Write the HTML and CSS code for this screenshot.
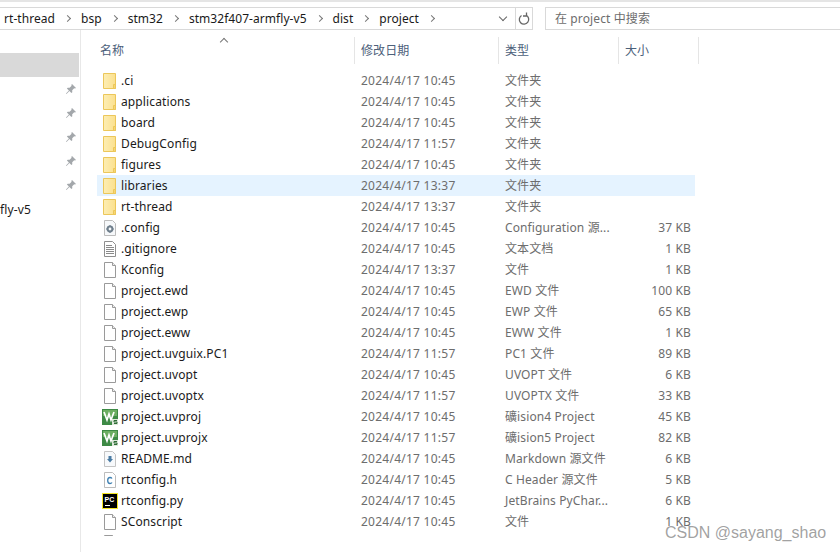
FILE: index.html

```html
<!DOCTYPE html>
<html lang="zh-CN">
<head>
  <meta charset="UTF-8">
  <title>project</title>
  <link rel="stylesheet" href="styles.css">
</head>
<body>

  <svg class="defs" width="0" height="0">
    <defs>
      <linearGradient id="folder-fill" x1="0" y1="0" x2="1" y2="0">
        <stop offset="0" stop-color="#fdeeb4"/>
        <stop offset="1" stop-color="#fbe08e"/>
      </linearGradient>
    </defs>
    <symbol id="folder" viewBox="0 0 16 16">
      <path d="M1.5 .5h12v15h-12z" fill="url(#folder-fill)" stroke="#ecc75a"/>
      <path d="M11.5 15.500v-4h2v4z" fill="#f8d672" stroke="#ecc75a"/>
    </symbol>
    <symbol id="file" viewBox="0 0 16 16">
      <path d="M2.5 .5h8l3 3v12h-11z" fill="#fff" stroke="#9a9a9a"/>
      <path d="M10.5 .5v3h3" fill="#eee" stroke="#9a9a9a"/>
    </symbol>
    <symbol id="text" viewBox="0 0 16 16">
      <path d="M2.5 .5h8l3 3v12h-11z" fill="#fff" stroke="#8f8f8f"/>
      <path d="M4 4.500h6M4 6.500h8M4 8.500h8M4 10.500h8M4 12.500h8" stroke="#8a8a8a"/>
    </symbol>
    <symbol id="gear" viewBox="0 0 16 16">
      <path d="M2.5 .5h8l3 3v12h-11z" fill="#f6f8fa" stroke="#bcbcbc"/>
      <circle cx="8" cy="9" r="2.4" fill="none" stroke="#6f7f8c" stroke-width="2"/>
      <path d="M8 5v1.500M8 11.500V13M4 9h1.500M10.500 9H12" stroke="#6f7f8c" stroke-width="1.2"/>
    </symbol>
    <symbol id="readme" viewBox="0 0 16 16">
      <path d="M2.500 .5h8l3 3v12h-11z" fill="#f7f9fb" stroke="#c4c4c4"/>
      <path d="M6.500 5h3v3h1.500L8 11.500 5 8h1.500z" fill="#4a7ba3"/>
    </symbol>
    <symbol id="cfile" viewBox="0 0 16 16">
      <path d="M2.500 .5h8l3 3v12h-11z" fill="#fff" stroke="#bcbcbc"/>
      <path d="M10 6.500Q9.300 5.500 8 5.500 5.700 5.500 5.700 8.500T8 11.500Q9.300 11.500 10 10.500" fill="none" stroke="#3c7fb1" stroke-width="1.3"/>
    </symbol>
    <symbol id="keil" viewBox="0 0 16 16">
      <rect width="16" height="16" fill="#3d8a45"/>
      <path d="M1 1h14v6H1z" fill="#6cae62"/>
      <path d="M2 3l3 8 2-6 2 6 3-8" fill="none" stroke="#fff" stroke-width="1.7"/>
      <rect x="10" y="10" width="6" height="6" fill="#dfe8dc"/>
      <path d="M15 11.500h-3v1.500h3v1.500h-3" fill="none" stroke="#2d6b35"/>
    </symbol>
    <symbol id="pycharm" viewBox="0 0 16 16">
      <rect width="16" height="16" fill="#f5e625"/>
      <rect x="1" y="1" width="14" height="14" fill="#000"/>
      <path d="M3 12h5v1H3z" fill="#fff"/>
      <text x="2.500" y="8.500" class="pc-mark">PC</text>
    </symbol>
    <symbol id="pin" viewBox="0 0 12 12">
      <path d="M7 1l4 4-1 .6-.8-.3-2 2 .1 1.900-.9.800-2-2L1.500 11 1 10.500l2.900-2.900-2-2 .8-.9 1.900.1 2-2L6.300 2z" fill="#a3a7ab"/>
    </symbol>
  </svg>

  <div class="window">
    <div class="toolbar">
      <div class="address">
        <div class="crumbs">
          <span>rt-thread</span><i class="sep"></i>
          <span>bsp</span><i class="sep"></i>
          <span>stm32</span><i class="sep"></i>
          <span>stm32f407-armfly-v5</span><i class="sep"></i>
          <span>dist</span><i class="sep"></i>
          <span>project</span><i class="sep"></i>
        </div>
        <i class="chevron"></i>
        <div class="refresh">
          <svg width="12" height="14" viewBox="0 0 12 14"><path d="M3.500 3.500A4.700 4.700 0 1 0 8 3.200M8.500 .5v3.500H5" fill="none" stroke="#666" stroke-width="1.3"/></svg>
        </div>
      </div>
      <div class="search">在 project 中搜索</div>
    </div>

    <div class="main">
      <nav class="sidebar">
        <div class="nav-item selected"></div>
        <div class="nav-item"><svg class="pin"><use href="#pin"/></svg></div>
        <div class="nav-item"><svg class="pin"><use href="#pin"/></svg></div>
        <div class="nav-item"><svg class="pin"><use href="#pin"/></svg></div>
        <div class="nav-item"><svg class="pin"><use href="#pin"/></svg></div>
        <div class="nav-item"><svg class="pin"><use href="#pin"/></svg></div>
        <div class="nav-item nav-label">fly-v5</div>
      </nav>

      <section class="files">
        <div class="sort-arrow"></div>
        <div class="head">
          <div class="col-name">名称</div>
          <div class="col-date">修改日期</div>
          <div class="col-type">类型</div>
          <div class="col-size">大小</div>
        </div>

        <div class="rows">
          <div class="row"><span class="name"><svg class="icon"><use href="#folder"/></svg>.ci</span><span class="date">2024/4/17 10:45</span><span class="type">文件夹</span><span class="size"></span></div>
          <div class="row"><span class="name"><svg class="icon"><use href="#folder"/></svg>applications</span><span class="date">2024/4/17 10:45</span><span class="type">文件夹</span><span class="size"></span></div>
          <div class="row"><span class="name"><svg class="icon"><use href="#folder"/></svg>board</span><span class="date">2024/4/17 10:45</span><span class="type">文件夹</span><span class="size"></span></div>
          <div class="row"><span class="name"><svg class="icon"><use href="#folder"/></svg>DebugConfig</span><span class="date">2024/4/17 11:57</span><span class="type">文件夹</span><span class="size"></span></div>
          <div class="row"><span class="name"><svg class="icon"><use href="#folder"/></svg>figures</span><span class="date">2024/4/17 10:45</span><span class="type">文件夹</span><span class="size"></span></div>
          <div class="row hover"><span class="name"><svg class="icon"><use href="#folder"/></svg>libraries</span><span class="date">2024/4/17 13:37</span><span class="type">文件夹</span><span class="size"></span></div>
          <div class="row"><span class="name"><svg class="icon"><use href="#folder"/></svg>rt-thread</span><span class="date">2024/4/17 13:37</span><span class="type">文件夹</span><span class="size"></span></div>
          <div class="row"><span class="name"><svg class="icon"><use href="#gear"/></svg>.config</span><span class="date">2024/4/17 10:45</span><span class="type">Configuration 源...</span><span class="size">37 KB</span></div>
          <div class="row"><span class="name"><svg class="icon"><use href="#text"/></svg>.gitignore</span><span class="date">2024/4/17 10:45</span><span class="type">文本文档</span><span class="size">1 KB</span></div>
          <div class="row"><span class="name"><svg class="icon"><use href="#file"/></svg>Kconfig</span><span class="date">2024/4/17 13:37</span><span class="type">文件</span><span class="size">1 KB</span></div>
          <div class="row"><span class="name"><svg class="icon"><use href="#file"/></svg>project.ewd</span><span class="date">2024/4/17 10:45</span><span class="type">EWD 文件</span><span class="size">100 KB</span></div>
          <div class="row"><span class="name"><svg class="icon"><use href="#file"/></svg>project.ewp</span><span class="date">2024/4/17 10:45</span><span class="type">EWP 文件</span><span class="size">65 KB</span></div>
          <div class="row"><span class="name"><svg class="icon"><use href="#file"/></svg>project.eww</span><span class="date">2024/4/17 10:45</span><span class="type">EWW 文件</span><span class="size">1 KB</span></div>
          <div class="row"><span class="name"><svg class="icon"><use href="#file"/></svg>project.uvguix.PC1</span><span class="date">2024/4/17 11:57</span><span class="type">PC1 文件</span><span class="size">89 KB</span></div>
          <div class="row"><span class="name"><svg class="icon"><use href="#file"/></svg>project.uvopt</span><span class="date">2024/4/17 10:45</span><span class="type">UVOPT 文件</span><span class="size">6 KB</span></div>
          <div class="row"><span class="name"><svg class="icon"><use href="#file"/></svg>project.uvoptx</span><span class="date">2024/4/17 11:57</span><span class="type">UVOPTX 文件</span><span class="size">33 KB</span></div>
          <div class="row"><span class="name"><svg class="icon"><use href="#keil"/></svg>project.uvproj</span><span class="date">2024/4/17 10:45</span><span class="type">礦ision4 Project</span><span class="size">45 KB</span></div>
          <div class="row"><span class="name"><svg class="icon"><use href="#keil"/></svg>project.uvprojx</span><span class="date">2024/4/17 11:57</span><span class="type">礦ision5 Project</span><span class="size">82 KB</span></div>
          <div class="row"><span class="name"><svg class="icon"><use href="#readme"/></svg>README.md</span><span class="date">2024/4/17 10:45</span><span class="type">Markdown 源文件</span><span class="size">6 KB</span></div>
          <div class="row"><span class="name"><svg class="icon"><use href="#cfile"/></svg>rtconfig.h</span><span class="date">2024/4/17 10:45</span><span class="type">C Header 源文件</span><span class="size">5 KB</span></div>
          <div class="row"><span class="name"><svg class="icon"><use href="#pycharm"/></svg>rtconfig.py</span><span class="date">2024/4/17 10:45</span><span class="type">JetBrains PyChar...</span><span class="size">6 KB</span></div>
          <div class="row"><span class="name"><svg class="icon"><use href="#file"/></svg>SConscript</span><span class="date">2024/4/17 10:45</span><span class="type">文件</span><span class="size">1 KB</span></div>
          <div class="row"><span class="name"><svg class="icon"><use href="#file"/></svg></span></div>
        </div>
      </section>
    </div>
  </div>

  <div class="watermark">CSDN @sayang_shao</div>

</body>
</html>
```

FILE: styles.css

```css
html, body {
  margin: 0;
  height: 100%;
  overflow: hidden;
  background: #fff;
}
body {
  font-family: "Noto Sans", "Noto Sans CJK SC", sans-serif;
  font-size: 12px;
  letter-spacing: .12px;
  color: #1a1a1a;
}
.defs {
  display: block;
  height: 0;
}
.pc-mark {
  font-family: "Liberation Sans", sans-serif;
  font-size: 7px;
  font-weight: bold;
  fill: #fff;
}

.window {
  height: 552px;
  display: flex;
  flex-direction: column;
  border-top: 2px solid #e5e5e5;
  padding-top: 5px;
  box-sizing: border-box;
}

/* address bar + search */
.toolbar {
  display: flex;
  height: 23px;
  gap: 12px;
}
.address {
  width: 533px;
  box-sizing: border-box;
  display: flex;
  align-items: center;
  border: 1px solid #d9d9d9;
  border-left: none;
}
.crumbs {
  flex: 1;
  display: flex;
  align-items: center;
  padding-left: 4px;
  letter-spacing: .05px;
}
.sep {
  width: 4px;
  height: 4px;
  margin: 0 11px 0 10px;
  border-top: 1px solid #777;
  border-right: 1px solid #777;
  transform: rotate(45deg);
}
.chevron {
  width: 5px;
  height: 5px;
  margin: 0 9px 3px 0;
  border-right: 1.5px solid #666;
  border-bottom: 1.5px solid #666;
  transform: rotate(45deg);
}
.refresh {
  width: 16px;
  height: 21px;
  display: flex;
  align-items: center;
  justify-content: center;
  border-left: 1px solid #d9d9d9;
}
.search {
  flex: 1;
  box-sizing: border-box;
  border: 1px solid #d9d9d9;
  border-right: none;
  padding-left: 9px;
  line-height: 21px;
  color: #6d6d6d;
}

.main {
  flex: 1;
  display: flex;
  min-height: 0;
}

/* left tree */
.sidebar {
  width: 81px;
  flex: none;
  box-sizing: border-box;
  border-right: 1px solid #e8e8e8;
  padding-top: 23px;
}
.nav-item {
  height: 24px;
  width: 79px;
  display: flex;
  align-items: center;
  justify-content: flex-end;
  padding-right: 2px;
  box-sizing: border-box;
}
.nav-item.selected {
  background: #d9d9d9;
}
.pin {
  width: 12px;
  height: 12px;
}
.nav-label {
  justify-content: flex-start;
  padding: 0;
}

/* file list */
.files {
  flex: 1;
  position: relative;
  min-width: 0;
}
.sort-arrow {
  position: absolute;
  left: 140px;
  top: 9px;
  width: 5px;
  height: 5px;
  border-top: 1px solid #777;
  border-left: 1px solid #777;
  transform: rotate(45deg);
}
.head {
  height: 27px;
  margin-top: 7px;
  display: grid;
  grid-template-columns: 274px 144px 120px 80px;
  color: #4c607a;
}
.head div {
  padding-left: 6px;
  line-height: 27px;
  border-right: 1px solid #e5e5e5;
}
.head .col-name {
  padding-left: 19px;
}
.rows {
  margin-top: 6px;
  height: 466px;
  overflow: hidden;
}
.row {
  display: grid;
  grid-template-columns: 264px 144px 120px 66px;
  height: 21px;
  line-height: 21px;
  margin-left: 16px;
  width: 598px;
  white-space: nowrap;
  color: #6d6d6d;
}
.row.hover {
  background: #e5f3ff;
}
.name {
  display: flex;
  align-items: center;
  color: #1a1a1a;
  padding-left: 5px;
}
.icon {
  width: 16px;
  height: 16px;
  margin-right: 3px;
  flex: none;
}
.date {
  letter-spacing: .25px;
}
.size {
  text-align: right;
}

.watermark {
  position: absolute;
  left: 665px;
  top: 524px;
  font-family: "Liberation Sans", sans-serif;
  font-size: 16px;
  letter-spacing: 0;
  color: rgba(120, 120, 120, .7);
}
```
